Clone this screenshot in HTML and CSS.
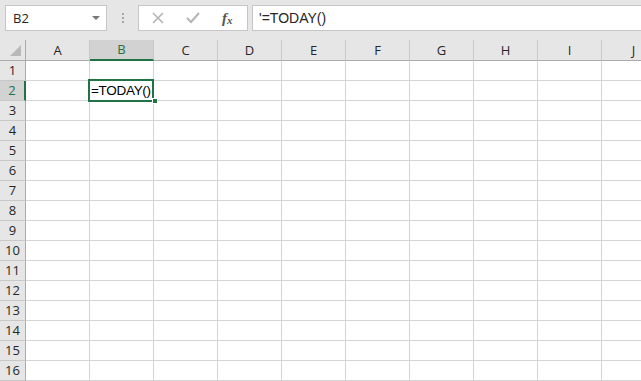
FILE: index.html
```html
<!DOCTYPE html>
<html lang="en">
<head>
  <meta charset="UTF-8">
  <title>Book1 - Excel</title>
  <link rel="stylesheet" href="styles.css">
</head>
<body>
  <div class="formula-bar">
    <div class="name-box">
      <span>B2</span>
      <span class="drop"></span>
    </div>
    <div class="grip"><i></i><i></i><i></i></div>
    <div class="fx-buttons">
      <svg width="14" height="14" viewBox="0 0 14 14"><path d="M2 2 L12 12 M12 2 L2 12" stroke="#b4b4b4" stroke-width="1.6" fill="none"/></svg>
      <svg width="16" height="14" viewBox="0 0 16 14"><path d="M2 7 L6 11 L14 2" stroke="#b4b4b4" stroke-width="2" fill="none"/></svg>
      <span class="fx">f<sub>x</sub></span>
    </div>
    <div class="formula-input">'=TODAY()</div>
  </div>

  <div class="sheet">
    <div class="corner"><span class="tri"></span></div>
    <div class="col-head">A</div>
    <div class="col-head active">B</div>
    <div class="col-head">C</div>
    <div class="col-head">D</div>
    <div class="col-head">E</div>
    <div class="col-head">F</div>
    <div class="col-head">G</div>
    <div class="col-head">H</div>
    <div class="col-head">I</div>
    <div class="col-head">J</div>
  </div>
  <div class="sheet" id="rows"></div>

  <script>
    // build the 16 rows of cells
    const rows = document.getElementById('rows');
    for (let r = 1; r <= 16; r++) {
      let head = document.createElement('div');
      head.className = 'row-head' + (r === 2 ? ' active' : '');
      head.textContent = r;
      rows.appendChild(head);
      for (let c = 0; c < 10; c++) {
        let cell = document.createElement('div');
        cell.className = 'cell';
        if (r === 2 && c === 1) {
          cell.classList.add('selected');
          cell.innerHTML = '<span class="value">=TODAY()</span><span class="sel"></span><span class="handle"></span>';
        }
        rows.appendChild(cell);
      }
    }
  </script>
</body>
</html>
```

FILE: styles.css
```css
* { box-sizing: border-box; margin: 0; padding: 0; }

body {
  width: 641px;
  height: 381px;
  overflow: hidden;
  background: #e6e6e6;
  font-family: "Open Sans", "Liberation Sans", sans-serif;
  color: #262626;
}

/* formula bar */
.formula-bar {
  display: flex;
  align-items: flex-start;
  height: 40px;
  padding: 5px 0 0 5px;
}

.name-box {
  width: 102px;
  height: 26px;
  background: #fff;
  border: 1px solid #c6c6c6;
  display: flex;
  align-items: center;
  justify-content: space-between;
  padding: 0 6px 0 7px;
  font-size: 13px;
}

.name-box .drop {
  width: 0;
  height: 0;
  border-left: 4px solid transparent;
  border-right: 4px solid transparent;
  border-top: 4px solid #777;
}

.grip {
  width: 31px;
  height: 26px;
  display: flex;
  flex-direction: column;
  align-items: center;
  justify-content: center;
  gap: 2px;
}

.grip i {
  width: 2px;
  height: 2px;
  background: #a6a6a6;
}

.fx-buttons {
  width: 110px;
  height: 26px;
  background: #fff;
  border: 1px solid #c6c6c6;
  display: flex;
  align-items: center;
  gap: 20px;
  padding-left: 12px;
}

.fx {
  font-family: "Liberation Serif", serif;
  font-style: italic;
  font-weight: bold;
  font-size: 15px;
  color: #555;
  margin-left: 1px;
}

.fx sub {
  font-size: 11px;
  vertical-align: -1px;
}

.formula-input {
  flex: 1;
  height: 26px;
  margin-left: 4px;
  background: #fff;
  border: 1px solid #c6c6c6;
  border-right: none;
  padding-left: 6px;
  line-height: 24px;
  font-family: "Liberation Sans", sans-serif;
  font-size: 14px;
}

/* sheet grid */
.sheet {
  display: grid;
  grid-template-columns: 26px repeat(10, 64px);
}

.corner, .col-head {
  height: 21px;
  background: #e6e6e6;
  border-bottom: 1px solid #ababab;
  border-right: 1px solid #c8c8c8;
}

.corner {
  position: relative;
  border-right: 1px solid #ababab;
}

.corner .tri {
  position: absolute;
  right: 4px;
  bottom: 4px;
  width: 0;
  height: 0;
  border-left: 11px solid transparent;
  border-bottom: 11px solid #b8b8b8;
}

.col-head {
  text-align: center;
  font-size: 13px;
  line-height: 20px;
}

.col-head.active {
  background: #d2d2d2;
  border-bottom: 2px solid #217346;
  color: #217346;
  line-height: 19px;
}

.row-head {
  height: 20px;
  background: #e6e6e6;
  border-right: 1px solid #ababab;
  border-bottom: 1px solid #c8c8c8;
  text-align: center;
  font-size: 13px;
  line-height: 19px;
}

.row-head.active {
  background: #d2d2d2;
  border-right: 2px solid #217346;
  color: #217346;
}

.cell {
  height: 20px;
  background: #fff;
  border-right: 1px solid #d4d4d4;
  border-bottom: 1px solid #d4d4d4;
}

.cell.selected {
  position: relative;
}

.cell .value {
  position: absolute;
  left: 1px;
  top: 0;
  font-family: "Liberation Sans", sans-serif;
  font-size: 13.5px;
  line-height: 19px;
  color: #000;
  z-index: 2;
  letter-spacing: -0.3px;
  white-space: nowrap;
}

.cell .sel {
  position: absolute;
  left: -2px;
  top: -2px;
  width: 66px;
  height: 23px;
  border: 2px solid #217346;
  z-index: 3;
}

.cell .handle {
  position: absolute;
  right: -5px;
  bottom: -4px;
  width: 6px;
  height: 6px;
  background: #217346;
  border: 1px solid #fff;
  z-index: 4;
}
```
